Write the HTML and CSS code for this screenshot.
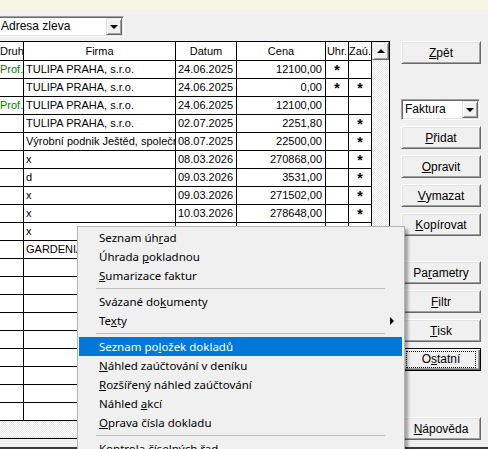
FILE: index.html
```html
<!DOCTYPE html>
<html lang="cs">
<head>
  <meta charset="UTF-8" />
  <title>Faktury</title>
  <link rel="stylesheet" href="styles.css">
</head>
<body>
  <div class="titlebar"></div>

  <div class="window">
    <div class="left">
      <div class="combo combo-addr">
        <span class="combo-text">Adresa zleva</span>
        <span class="combo-btn"><span class="arrow-down"></span></span>
      </div>

      <div class="grid">
        <div class="grid-main">
          <div class="rows">
            <div class="row head">
              <div class="c c1">Druh</div>
              <div class="c c2">Firma</div>
              <div class="c c3">Datum</div>
              <div class="c c4">Cena</div>
              <div class="c c5">Uhr.</div>
              <div class="c c6">Zaú.</div>
            </div>
            <div class="row">
              <div class="c c1 prof">Prof.</div>
              <div class="c c2">TULIPA PRAHA, s.r.o.</div>
              <div class="c c3">24.06.2025</div>
              <div class="c c4">12100,00</div>
              <div class="c c5 star">*</div>
              <div class="c c6 star"></div>
            </div>
            <div class="row">
              <div class="c c1"></div>
              <div class="c c2">TULIPA PRAHA, s.r.o.</div>
              <div class="c c3">24.06.2025</div>
              <div class="c c4">0,00</div>
              <div class="c c5 star">*</div>
              <div class="c c6 star">*</div>
            </div>
            <div class="row">
              <div class="c c1 prof">Prof.</div>
              <div class="c c2">TULIPA PRAHA, s.r.o.</div>
              <div class="c c3">24.06.2025</div>
              <div class="c c4">12100,00</div>
              <div class="c c5 star"></div>
              <div class="c c6 star"></div>
            </div>
            <div class="row">
              <div class="c c1"></div>
              <div class="c c2">TULIPA PRAHA, s.r.o.</div>
              <div class="c c3">02.07.2025</div>
              <div class="c c4">2251,80</div>
              <div class="c c5 star"></div>
              <div class="c c6 star">*</div>
            </div>
            <div class="row">
              <div class="c c1"></div>
              <div class="c c2">Výrobní podnik Ještěd, společnost</div>
              <div class="c c3">08.07.2025</div>
              <div class="c c4">22500,00</div>
              <div class="c c5 star"></div>
              <div class="c c6 star">*</div>
            </div>
            <div class="row">
              <div class="c c1"></div>
              <div class="c c2">x</div>
              <div class="c c3">08.03.2026</div>
              <div class="c c4">270868,00</div>
              <div class="c c5 star"></div>
              <div class="c c6 star">*</div>
            </div>
            <div class="row">
              <div class="c c1"></div>
              <div class="c c2">d</div>
              <div class="c c3">09.03.2026</div>
              <div class="c c4">3531,00</div>
              <div class="c c5 star"></div>
              <div class="c c6 star">*</div>
            </div>
            <div class="row">
              <div class="c c1"></div>
              <div class="c c2">x</div>
              <div class="c c3">09.03.2026</div>
              <div class="c c4">271502,00</div>
              <div class="c c5 star"></div>
              <div class="c c6 star">*</div>
            </div>
            <div class="row">
              <div class="c c1"></div>
              <div class="c c2">x</div>
              <div class="c c3">10.03.2026</div>
              <div class="c c4">278648,00</div>
              <div class="c c5 star"></div>
              <div class="c c6 star">*</div>
            </div>
            <div class="row">
              <div class="c c1"></div>
              <div class="c c2">x</div>
              <div class="c c3">11.03.2026</div>
              <div class="c c4">1200,00</div>
              <div class="c c5 star"></div>
              <div class="c c6 star">*</div>
            </div>
            <div class="row">
              <div class="c c1"></div>
              <div class="c c2">GARDENIA s.r.o.</div>
              <div class="c c3">12.03.2026</div>
              <div class="c c4">4500,00</div>
              <div class="c c5 star"></div>
              <div class="c c6 star"></div>
            </div>
            <div class="row"><div class="c c1"></div><div class="c c2"></div><div class="c c3"></div><div class="c c4"></div><div class="c c5"></div><div class="c c6"></div></div>
            <div class="row"><div class="c c1"></div><div class="c c2"></div><div class="c c3"></div><div class="c c4"></div><div class="c c5"></div><div class="c c6"></div></div>
            <div class="row"><div class="c c1"></div><div class="c c2"></div><div class="c c3"></div><div class="c c4"></div><div class="c c5"></div><div class="c c6"></div></div>
            <div class="row"><div class="c c1"></div><div class="c c2"></div><div class="c c3"></div><div class="c c4"></div><div class="c c5"></div><div class="c c6"></div></div>
            <div class="row"><div class="c c1"></div><div class="c c2"></div><div class="c c3"></div><div class="c c4"></div><div class="c c5"></div><div class="c c6"></div></div>
            <div class="row"><div class="c c1"></div><div class="c c2"></div><div class="c c3"></div><div class="c c4"></div><div class="c c5"></div><div class="c c6"></div></div>
            <div class="row"><div class="c c1"></div><div class="c c2"></div><div class="c c3"></div><div class="c c4"></div><div class="c c5"></div><div class="c c6"></div></div>
            <div class="row"><div class="c c1"></div><div class="c c2"></div><div class="c c3"></div><div class="c c4"></div><div class="c c5"></div><div class="c c6"></div></div>
            <div class="row"><div class="c c1"></div><div class="c c2"></div><div class="c c3"></div><div class="c c4"></div><div class="c c5"></div><div class="c c6"></div></div>
          </div>
          <div class="vscroll">
            <div class="scroll-btn"><span class="arrow-up"></span></div>
            <div class="track"></div>
          </div>
        </div>
        <div class="hscroll"></div>
      </div>
    </div>

    <div class="right">
      <div class="btn"><u>Z</u>pět</div>
      <div class="combo combo-kind">
        <span class="combo-text">Faktura</span>
        <span class="combo-btn"><span class="arrow-down"></span></span>
      </div>
      <div class="btn"><u>P</u>řidat</div>
      <div class="btn"><u>O</u>pravit</div>
      <div class="btn"><u>V</u>ymazat</div>
      <div class="btn"><u>K</u>opírovat</div>
      <div class="btn btn-group">Pa<u>r</u>ametry</div>
      <div class="btn"><u>F</u>iltr</div>
      <div class="btn"><u>T</u>isk</div>
      <div class="btn btn-default"><span class="focus">O<u>s</u>tatní</span></div>
      <div class="btn btn-help"><u>N</u>ápověda</div>
    </div>
  </div>

  <div class="bottom-edge"></div>

  <!-- kontextové menu tlačítka Ostatní -->
  <div class="menu">
    <div class="item">Seznam úh<u>r</u>ad</div>
    <div class="item">Úhrada <u>p</u>okladnou</div>
    <div class="item"><u>S</u>umarizace faktur</div>
    <div class="sep"></div>
    <div class="item">Svázané do<u>k</u>umenty</div>
    <div class="item sub">Te<u>x</u>ty</div>
    <div class="sep"></div>
    <div class="item active">Seznam po<u>l</u>ožek dokladů</div>
    <div class="item"><u>N</u>áhled zaúčtování v deníku</div>
    <div class="item"><u>R</u>ozšířený náhled zaúčtování</div>
    <div class="item">Náhled <u>a</u>kcí</div>
    <div class="item"><u>O</u>prava čísla dokladu</div>
    <div class="sep"></div>
    <div class="item">Kontrola číselných řad</div>
  </div>
</body>
</html>
```

FILE: styles.css
```css
body {
  margin: 0;
  width: 488px;
  height: 449px;
  overflow: hidden;
  position: relative;
  background-color: #f0f0f0;
  font-family: "Liberation Sans", Arial, sans-serif;
  font-size: 11px;
  color: #000;
}

u {
  text-decoration: underline;
  text-underline-offset: 1px;
}

.titlebar {
  height: 11px;
  background-color: #f8f4e4;
}

.window {
  display: flex;
  height: 436px;
}

.left {
  width: 390px;
  flex-shrink: 0;
}

/* combobox */
.combo {
  display: flex;
  align-items: center;
  height: 21px;
  box-sizing: border-box;
  background-color: #fff;
  border: 1px solid;
  border-color: #a0a0a0 #fff #fff #a0a0a0;
  box-shadow: inset 1px 1px #696969, inset -1px -1px #e3e3e3;
  padding: 2px 2px 2px 3px;
}

.combo-text {
  flex: 1;
  white-space: nowrap;
  overflow: hidden;
  line-height: 15px;
  font-size: 12px;
}

.combo-btn {
  width: 16px;
  height: 17px;
  box-sizing: border-box;
  background-color: #f0f0f0;
  border: 1px solid;
  border-color: #e3e3e3 #696969 #696969 #e3e3e3;
  box-shadow: inset 1px 1px #fff, inset -1px -1px #a0a0a0;
  display: flex;
  align-items: center;
  justify-content: center;
  margin-right: -1px;
}

.arrow-down {
  width: 0;
  height: 0;
  border-left: 4px solid transparent;
  border-right: 4px solid transparent;
  border-top: 4px solid #000;
}

.arrow-up {
  width: 0;
  height: 0;
  border-left: 4px solid transparent;
  border-right: 4px solid transparent;
  border-bottom: 4px solid #000;
}

.combo-addr {
  width: 127px;
  margin-left: -3px;
  margin-top: 5px;
}

.combo-kind {
  width: 79px;
  margin-top: 35px;
}

/* mřížka */
.grid {
  margin-top: 4px;
  border-top: 1px solid #000;
  border-right: 1px solid #000;
  width: 390px;
  box-sizing: border-box;
}

.grid-main {
  display: flex;
}

.rows {
  width: 372px;
  background-color: #fff;
}

.row {
  display: grid;
  grid-template-columns: 24px 152px 61px 89px 23px 23px;
  height: 18px;
  box-sizing: border-box;
  border-bottom: 1px solid #000;
}

.row.head {
  height: 19px;
}

.c {
  border-right: 1px solid #000;
  white-space: nowrap;
  overflow: hidden;
  line-height: 17px;
  padding-left: 2px;
}

.head .c {
  line-height: 18px;
  text-align: center;
  padding: 0;
}

.c1 {
  padding-left: 0;
}

.c4 {
  text-align: right;
  padding-right: 3px;
  padding-left: 0;
}

.prof {
  color: #008000;
}

.star {
  text-align: center;
  padding: 0;
  font-size: 14px;
  font-weight: bold;
  line-height: 18px;
}

.vscroll {
  width: 17px;
  display: flex;
  flex-direction: column;
}

.scroll-btn {
  height: 18px;
  box-sizing: border-box;
  background-color: #f0f0f0;
  border: 1px solid;
  border-color: #e3e3e3 #696969 #696969 #e3e3e3;
  box-shadow: inset 1px 1px #fff, inset -1px -1px #a0a0a0;
  display: flex;
  align-items: center;
  justify-content: center;
}

.track {
  flex: 1;
  background: repeating-conic-gradient(#fff 0 25%, #e8e8e8 0 50%) 0 0 / 2px 2px;
}

.hscroll {
  height: 18px;
  box-sizing: border-box;
  border-bottom: 1px solid #000;
  background: repeating-conic-gradient(#fff 0 25%, #e8e8e8 0 50%) 0 0 / 2px 2px;
}

/* tlačítka vpravo */
.right {
  margin-left: 11px;
  padding-top: 30px;
  display: flex;
  flex-direction: column;
}

.btn {
  width: 80px;
  height: 23px;
  box-sizing: border-box;
  background-color: #f0f0f0;
  border: 1px solid;
  border-color: #fff #696969 #696969 #fff;
  box-shadow: inset 1px 1px #e3e3e3, inset -1px -1px #a0a0a0;
  display: flex;
  align-items: center;
  justify-content: center;
  font-size: 12px;
  margin-top: 6px;
}

.btn:first-child {
  margin-top: 0;
}

.btn-group {
  margin-top: 25px;
}

.btn-help {
  margin-top: 46px;
}

.btn-default {
  border: 1px solid #000;
  box-shadow: inset 1px 1px #fff, inset -1px -1px #696969, inset -2px -2px #a0a0a0;
}

.focus {
  display: block;
  width: 68px;
  height: 15px;
  line-height: 15px;
  text-align: center;
  outline: 1px dotted #000;
}

.bottom-edge {
  height: 2px;
  background-color: #3a3a3a;
}

/* kontextové menu */
.menu {
  position: absolute;
  left: 77px;
  top: 226px;
  width: 328px;
  box-sizing: border-box;
  padding: 1px 2px 0 1px;
  background-color: #f0f0f0;
  border: 1px solid #b4b4b4;
  box-shadow: 3px 3px 3px rgba(0, 0, 0, 0.35);
  font-family: "Noto Sans", "Open Sans", sans-serif;
  font-size: 11.5px;
}

.item {
  height: 19px;
  line-height: 19px;
  padding-left: 20px;
  white-space: nowrap;
  position: relative;
}

.item.active {
  background-color: #0078d7;
  color: #fff;
}

.item.sub::after {
  content: "";
  position: absolute;
  right: 8px;
  top: 6px;
  border-top: 4px solid transparent;
  border-bottom: 4px solid transparent;
  border-left: 4px solid #000;
}

.sep {
  height: 1px;
  margin: 3px 17px 3px 17px;
  background-color: #bdbdbd;
}
```
